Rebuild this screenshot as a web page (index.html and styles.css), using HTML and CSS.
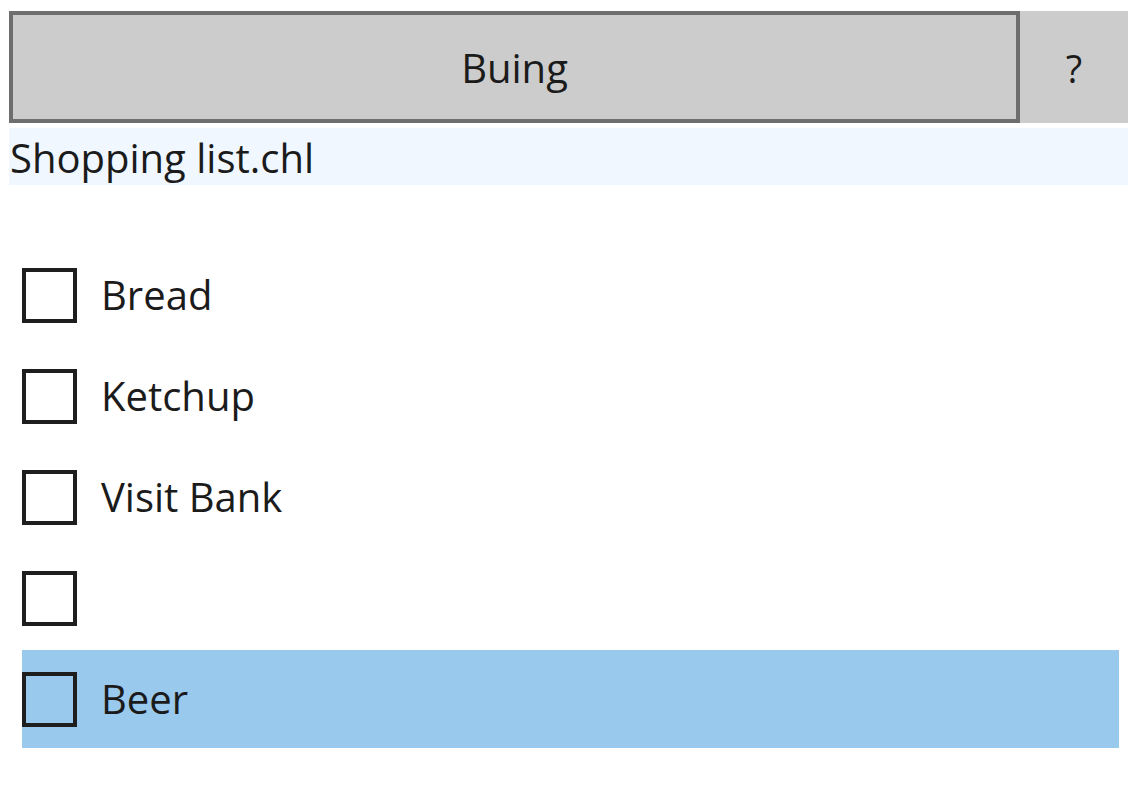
FILE: index.html
```html
<!DOCTYPE html>
<html>
<head>
<meta charset="utf-8">
<link rel="stylesheet" href="styles.css">
</head>
<body>
<div class="toolbar">
  <div class="main-btn">Buing</div>
  <div class="help-btn">?</div>
</div>
<div class="file">Shopping list.chl</div>
<div class="list">
  <div class="row"><span class="box"></span><span class="label">Bread</span></div>
  <div class="row"><span class="box"></span><span class="label">Ketchup</span></div>
  <div class="row"><span class="box"></span><span class="label">Visit Bank</span></div>
  <div class="row"><span class="box"></span><span class="label"></span></div>
  <div class="row selected"><span class="box"></span><span class="label">Beer</span></div>
</div>
</body>
</html>
```
FILE: styles.css
```css
html, body {
  margin: 0;
  padding: 0;
  background: #ffffff;
}
body {
  font-family: "Open Sans", "Noto Sans", sans-serif;
  color: #1b1b1b;
}
.toolbar {
  display: flex;
  margin: 11px 8px 0 9px;
  height: 112px;
}
.main-btn {
  flex: 1;
  box-sizing: border-box;
  border: 4px solid #6e6e6e;
  background: #cccccc;
  display: flex;
  align-items: center;
  justify-content: center;
  font-size: 40px;
}
.help-btn {
  width: 108px;
  background: #cccccc;
  display: flex;
  align-items: center;
  justify-content: center;
  font-size: 38px;
  padding-top: 2px;
  box-sizing: border-box;
}
.file {
  margin: 5px 8px 0 9px;
  height: 57px;
  background: #f0f7fe;
  font-size: 40px;
  line-height: 60px;
  padding-left: 1px;
  white-space: nowrap;
  overflow: hidden;
}
.list {
  margin: 61px 17px 0 22px;
  display: flex;
  flex-direction: column;
  gap: 3px;
}
.row {
  height: 98px;
  display: flex;
  align-items: center;
}
.row.selected {
  background: #9ac9ee;
}
.box {
  width: 55px;
  height: 55px;
  box-sizing: border-box;
  border: 4px solid #1e1e1e;
  flex: none;
}
.label {
  margin-left: 24px;
  font-size: 40px;
  padding-bottom: 2px;
}
```
